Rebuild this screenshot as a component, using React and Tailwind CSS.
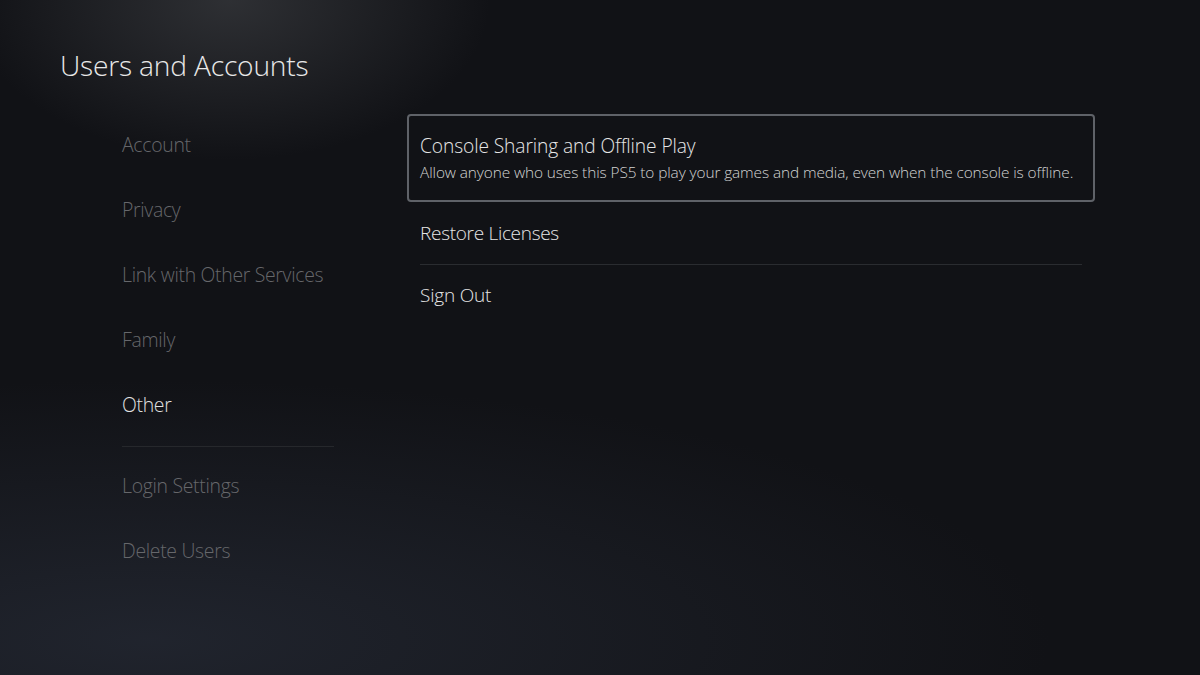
export default function App() {
  const navTop = ["Account", "Privacy", "Link with Other Services", "Family", "Other"];
  const navBottom = ["Login Settings", "Delete Users"];

  return (
    <div
      className="relative w-full h-[675px] overflow-hidden bg-[#111216] font-['Open_Sans','Noto_Sans',sans-serif] font-light"
      style={{
        backgroundImage:
          "radial-gradient(ellipse 260px 160px at 230px 0px, rgba(70,72,76,0.55), transparent 100%), radial-gradient(ellipse 900px 260px at 150px 640px, rgba(34,38,48,0.9), transparent 100%)",
      }}
    >
      {/* Header */}
      <h1 className="px-[60px] pt-[45px] text-[28.2px] leading-[40px] text-[#e8e8e8] tracking-[-0.2px]">
        Users and Accounts
      </h1>

      <div className="flex mt-[27px]">
        {/* ── Side nav ───────────────────────────── */}
        <nav className="ml-[122px] w-[212px] flex flex-col">
          {navTop.map((label) => (
            <div
              key={label}
              className={`h-[65px] flex items-center text-[19.4px] tracking-[-0.3px] ${
                label === "Other" ? "text-[#e2e2e2]" : "text-[#66676b]"
              }`}
            >
              {label}
            </div>
          ))}
          <div className="mt-[9px] h-px bg-[#26282c]" />
          <div className="mt-[6px]" />
          {navBottom.map((label) => (
            <div
              key={label}
              className="h-[65px] flex items-center text-[19.4px] tracking-[-0.3px] text-[#66676b]"
            >
              {label}
            </div>
          ))}
        </nav>

        {/* ── Options ────────────────────────────── */}
        <div className="ml-[73px] w-[688px] mt-[2px] flex flex-col">
          <div className="h-[88px] border-2 border-[#5f6268] rounded-[4px] px-[11px] flex flex-col justify-center gap-[5px]">
            <div className="text-[19.2px] leading-[24px] text-[#e6e6e6] tracking-[-0.1px]">
              Console Sharing and Offline Play
            </div>
            <div className="text-[15.4px] leading-[20px] text-[#d2d2d2] tracking-[-0.1px]">
              Allow anyone who uses this PS5 to play your games and media, even when the console is offline.
            </div>
          </div>
          <div className="h-[62px] px-[13px] flex items-center text-[19px] text-[#e6e6e6] tracking-[-0.3px]">
            Restore Licenses
          </div>
          <div className="mx-[13px] h-px bg-[#2a2c30]" />
          <div className="h-[61px] px-[13px] flex items-center text-[19px] text-[#e6e6e6] tracking-[-0.2px]">
            Sign Out
          </div>
        </div>
      </div>
    </div>
  );
}
